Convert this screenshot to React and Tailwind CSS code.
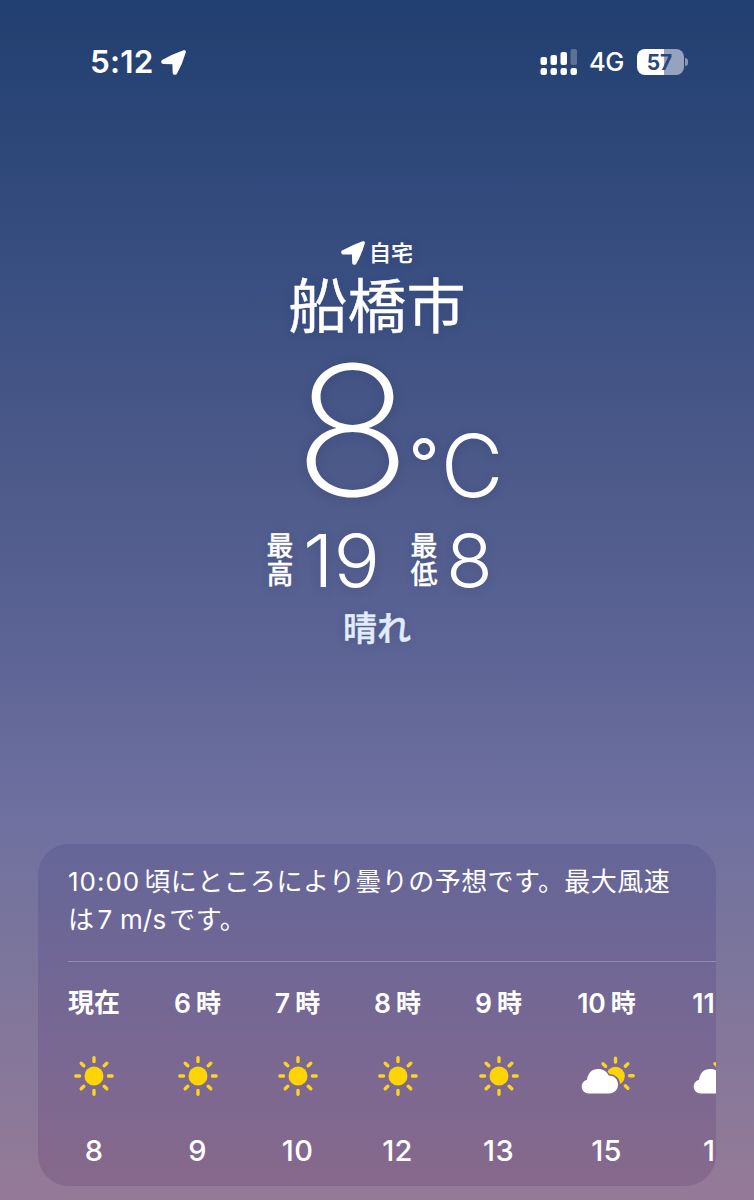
const HOURS = [
  { label: "現在", icon: "sun", temp: "8", width: "w-[52px]" },
  { hour: "6", icon: "sun", temp: "9", width: "w-[47px]" },
  { hour: "7", icon: "sun", temp: "10", width: "w-[45px]" },
  { hour: "8", icon: "sun", temp: "12", width: "w-[47px]" },
  { hour: "9", icon: "sun", temp: "13", width: "w-[47px]" },
  { hour: "10", icon: "cloud-sun", temp: "15", width: "w-[61px]" },
  { hour: "11", icon: "cloud-sun", temp: "16", width: "w-[55px]" },
];

const LocationArrow = ({ className }) => (
  <svg viewBox="0 0 24 24" className={className} fill="currentColor" stroke="currentColor" strokeWidth="3.4" strokeLinejoin="round">
    <path d="M22.200 1.800 Q12 5.400 1.900 11 L2 11.700 L12.600 11.900 L12.900 22 L13.800 22 Q19 13 22.200 1.800 Z" />
  </svg>
);

const Sun = () => (
  <svg viewBox="0 0 40 40" className="h-10 w-10 shrink-0">
    <circle cx="20" cy="20" r="9.500" fill="#ffd404" />
    <path
      d="M20 1.800v3.800M20 34.400v3.800M1.800 20h3.800M34.400 20h3.800M7.200 7.200l2.600 2.600M30.200 30.200l2.600 2.600M7.200 32.800l2.600-2.600M30.200 9.800l2.600-2.600"
      stroke="#fbd324"
      strokeWidth="3.4"
      strokeLinecap="round"
    />
  </svg>
);

const CloudSun = () => (
  <svg viewBox="0 0 54 40" className="h-10 w-[54px] shrink-0 translate-x-px">
    <defs>
      <mask id="cloud-gap">
        <rect width="54" height="40" fill="white" />
        <path d="M7.500 37.500A7 7 0 0 1 6 23.700C7 17 11 13 17.200 13c5 0 8.500 2.500 10.500 6.500 6 0 9.800 4 9.800 9 0 5.500-4 9-9 9z" fill="black" stroke="black" strokeWidth="3" />
      </mask>
    </defs>
    <g mask="url(#cloud-gap)">
      <circle cx="34.500" cy="20" r="9.300" fill="#ffd404" />
    </g>
    <path
      d="M34.500 2.200v3.800M48.700 19.800h3.500M22 7.700l2.600 2.600M44.300 10.300l2.600-2.600M44.300 29.700l2.600 2.600"
      stroke="#fbd324"
      strokeWidth="3.4"
      strokeLinecap="round"
    />
    <path d="M7.500 37.500A7 7 0 0 1 6 23.700C7 17 11 13 17.200 13c5 0 8.500 2.500 10.500 6.500 6 0 9.300 4 9.300 9 0 5.500-4 9-9 9z" fill="#fff" />
  </svg>
);

const StatusBar = () => (
  <header className="flex h-[124px] items-center pl-[90px] pr-[66px]">
    <span className="w-[64px] whitespace-nowrap text-[31.5px] font-semibold leading-none tracking-[0.2px]">5:12</span>
    <LocationArrow className="ml-[7px] h-[25px] w-[25px]" />
    <svg viewBox="0 0 38 26" className="ml-auto h-[26px] w-[38px]" fill="white">
      <rect x="0.500" y="8" width="6.500" height="8" rx="2" />
      <rect x="10.500" y="6" width="6.500" height="10" rx="2" />
      <rect x="20.500" y="3" width="6.500" height="13" rx="2" />
      <rect x="30.500" y="0" width="6.500" height="16" rx="2" opacity="0.25" />
      <rect x="0.500" y="19" width="6.500" height="7" rx="2.200" />
      <rect x="10.500" y="19" width="6.500" height="7" rx="2.200" />
      <rect x="20.500" y="19" width="6.500" height="7" rx="2.200" />
      <rect x="30.500" y="19" width="6.500" height="7" rx="2.200" />
    </svg>
    <span className="ml-[11px] w-9 whitespace-nowrap text-[25.5px] font-medium leading-none tracking-[-0.5px]">4G</span>
    <div className="ml-3 flex h-[26px] w-[47px] items-center justify-center rounded-[8px] bg-linear-to-r from-white from-57% to-[#95a3bf] to-57%">
      <span className="pr-[2px] text-[21px] font-bold leading-none text-[#2c4778]">57</span>
    </div>
    <div className="ml-px h-2 w-[3px] rounded-r-full bg-[#8797b5]" />
  </header>
);

const Extreme = ({ chars, children }) => (
  <div className="flex items-center">
    <div className="flex w-[28px] flex-col text-center text-[27px] font-medium leading-[28px] [-webkit-text-stroke:0.3px_white]">
      <span>{chars[0]}</span>
      <span>{chars[1]}</span>
    </div>
    {children}
  </div>
);

const CurrentWeather = () => (
  <section className="flex h-[720px] flex-col items-center pt-[116px] [text-shadow:0_1px_10px_rgba(30,40,90,0.2)]">
    <div className="flex h-[26px] items-center">
      <LocationArrow className="h-6 w-6" />
      <span className="ml-1 text-[22px] font-medium leading-none [-webkit-text-stroke:0.2px_white]">自宅</span>
    </div>
    <h1 className="mt-[9px] text-[59px] font-normal leading-[64px] [-webkit-text-stroke:0.4px_white]">船橋市</h1>
    <div className="mt-[23px] flex h-[137px] items-end pl-[47px]">
      <span className="w-[111px] origin-center scale-x-[1.08] text-center text-[181px] font-extralight leading-[137px]">8</span>
      <span className="w-[32px] pb-[3px] text-center text-[67px] font-normal leading-[66px]">°</span>
      <span className="w-[64px] text-center text-[86px] font-light leading-[66px]">C</span>
    </div>
    <div className="mt-[32px] flex h-[60px] items-center pl-[3px]">
      <Extreme chars="最高">
        <span className="ml-[9px] w-[75px] origin-left scale-x-[1.06] text-[73px] font-light leading-[60px]">19</span>
      </Extreme>
      <div className="w-8" />
      <Extreme chars="最低">
        <span className="ml-[9px] w-[44px] scale-x-[1.05] text-center text-[73px] font-light leading-[60px]">8</span>
      </Extreme>
    </div>
    <p className="mt-[17px] text-[34px] font-medium leading-[42px] text-[#e2ecff] [-webkit-text-stroke:0.5px_#e2ecff]">晴れ</p>
  </section>
);

const HourColumn = ({ label, hour, icon, temp, width }) => (
  <li className={`flex shrink-0 flex-col items-center ${width}`}>
    <div className="flex h-[30px] items-center whitespace-nowrap text-[26.5px] font-semibold leading-none">
      {label ? (
        <span className="text-[26px]">{label}</span>
      ) : (
        <>
          {hour}
          <span className="ml-[5px] text-[25px]">時</span>
        </>
      )}
    </div>
    <div className="mt-[38px] flex h-10 items-center justify-center">
      {icon === "sun" ? <Sun /> : <CloudSun />}
    </div>
    <span className="mt-[40px] text-[29px] font-medium leading-[30px] tracking-[0.3px]">{temp}</span>
  </li>
);

const ForecastCard = () => (
  <section className="mx-[38px] h-[342px] overflow-hidden rounded-[31px] bg-linear-to-b from-[#656698] via-[#726795] via-40% to-[#87698c] pl-[30px]">
    <p className="pt-[19px] text-[26px] leading-[38px] tracking-[0.45px]">
      <span className="tracking-[1px]">10:00</span>
      <span className="ml-[4px]">頃にところにより曇りの予想です。最大風速</span>
      <br />
      は<span className="mx-[3px] tracking-[0.2px]">7 m/s</span>です。
    </p>
    <div className="mt-[22px] h-px bg-white/25" />
    <ul className="mt-[26px] flex gap-[54px]">
      {HOURS.map((item, i) => (
        <HourColumn key={i} {...item} />
      ))}
    </ul>
  </section>
);

export default function App() {
  return (
    <main className="h-[1200px] w-[754px] overflow-hidden bg-linear-[180deg,#213f70_0%,#374d80_21%,#465686_34%,#5c6495_54%,#7071a0_69%,#7e769b_82%,#957a98_100%] font-['Inter','Noto_Sans_CJK_JP',sans-serif] text-white [font-optical-sizing:none]">
      <StatusBar />
      <CurrentWeather />
      <ForecastCard />
    </main>
  );
}
